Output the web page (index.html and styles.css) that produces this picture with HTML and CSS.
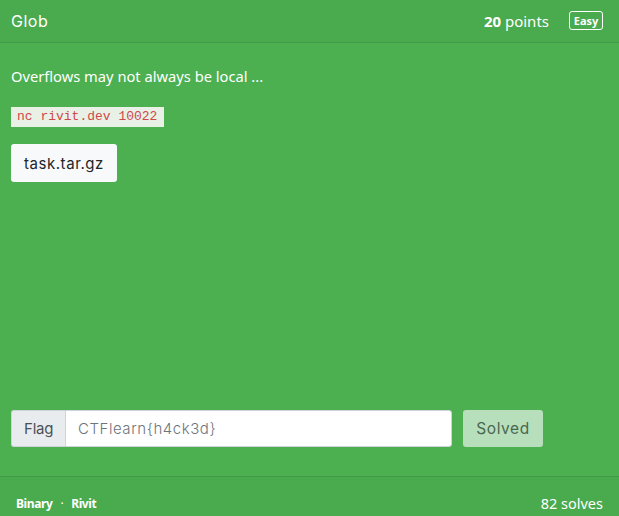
FILE: index.html
```html
<!DOCTYPE html>
<html lang="en">
<head>
<meta charset="utf-8">
<title>Glob</title>
<link rel="stylesheet" href="styles.css">
</head>
<body>
<div class="card">
  <div class="card-header">
    <div class="title">Glob</div>
    <div class="meta">
      <span class="points"><b>20</b> points</span>
      <span class="badge">Easy</span>
    </div>
  </div>
  <div class="card-body">
    <p class="desc">Overflows may not always be local ...</p>
    <div><code class="cmd">nc rivit.dev 10022</code></div>
    <div><a class="file-btn">task.tar.gz</a></div>
    <form class="flag-form">
      <div class="input-group">
        <span class="addon">Flag</span>
        <input class="flag-input" type="text" value="CTFlearn{h4ck3d}">
      </div>
      <button class="solved-btn" type="button" disabled>Solved</button>
    </form>
  </div>
  <div class="card-footer">
    <div class="tags"><b>Binary</b><span class="dot">·</span><b>Rivit</b></div>
    <div class="solves">82 solves</div>
  </div>
</div>
</body>
</html>
```
FILE: styles.css
```css
* { box-sizing: border-box; }
html, body { margin: 0; padding: 0; }
body {
  width: 619px;
  height: 516px;
  background: #4caf50;
  font-family: "Segoe UI", "Noto Sans", "Open Sans", sans-serif;
  color: #fff;
  overflow: hidden;
}
.card {
  display: flex;
  flex-direction: column;
  height: 516px;
}
.card-header {
  height: 43px;
  display: flex;
  align-items: center;
  justify-content: space-between;
  padding: 0 16px 1px 11px;
  background: #4aaa4e;
  border-bottom: 1px solid #43994a;
}
.title {
  font-family: "Inter", "Lato", sans-serif;
  font-size: 16px;
  font-weight: 400;
  letter-spacing: 0.5px;
}
.meta {
  display: flex;
  align-items: center;
  gap: 20px;
}
.points { font-size: 15px; }
.points b { font-weight: 700; }
.badge {
  display: inline-flex;
  align-items: center;
  justify-content: center;
  width: 34px;
  height: 19px;
  border: 1px solid #fff;
  border-radius: 3px;
  font-size: 11px;
  font-weight: 700;
}
.card-body {
  flex: 1;
  display: flex;
  flex-direction: column;
  padding: 22px 11px 29px;
}
.desc {
  margin: 0;
  font-size: 14.7px;
  line-height: 22px;
}
.cmd {
  display: inline-block;
  margin-top: 20px;
  height: 20px;
  line-height: 20px;
  padding: 0 7px 0 6px;
  background: #e9f1e6;
  color: #d04848;
  font-family: "Liberation Mono", "DejaVu Sans Mono", monospace;
  font-size: 13px;
}
.file-btn {
  display: inline-flex;
  align-items: center;
  margin-top: 17px;
  height: 38px;
  padding: 0 13px;
  background: #f8f9fa;
  color: #212529;
  border-radius: 3px;
  font-family: "Inter", "Lato", sans-serif;
  font-size: 15px;
  letter-spacing: 0.55px;
}
.flag-form {
  margin-top: auto;
  display: flex;
  align-items: center;
  gap: 11px;
}
.input-group {
  display: flex;
  width: 441px;
  height: 37px;
}
.addon {
  display: flex;
  align-items: center;
  width: 54px;
  padding: 0 12px;
  background: #e9ecef;
  color: #495057;
  border: 1px solid #ced4da;
  border-right: 0;
  border-radius: 3px 0 0 3px;
  font-family: "Inter", "Lato", sans-serif;
  font-size: 15px;
  letter-spacing: -0.2px;
}
.flag-input {
  flex: 1;
  height: 37px;
  padding: 0 12px;
  border: 1px solid #ced4da;
  border-radius: 0 3px 3px 0;
  background: #fff;
  color: #6c757d;
  font-family: "Inter", "Lato", sans-serif;
  font-weight: 300;
  font-size: 15px;
  letter-spacing: 0.55px;
}
.solved-btn {
  width: 80px;
  height: 37px;
  border: 0;
  border-radius: 3px;
  background: #b8dfbb;
  color: #4a6650;
  font-family: "Inter", "Lato", sans-serif;
  font-size: 15.5px;
  letter-spacing: 0.6px;
  padding: 0;
}
.card-footer {
  height: 40px;
  display: flex;
  align-items: center;
  justify-content: space-between;
  padding: 13px 16px 0 16px;
  background: #4aaa4e;
  border-top: 1px solid #43994a;
}
.tags {
  font-size: 12px;
  letter-spacing: -0.4px;
}
.tags b { font-weight: 700; }
.dot { margin: 0 8px; }
.solves { font-size: 14.5px; }
```
